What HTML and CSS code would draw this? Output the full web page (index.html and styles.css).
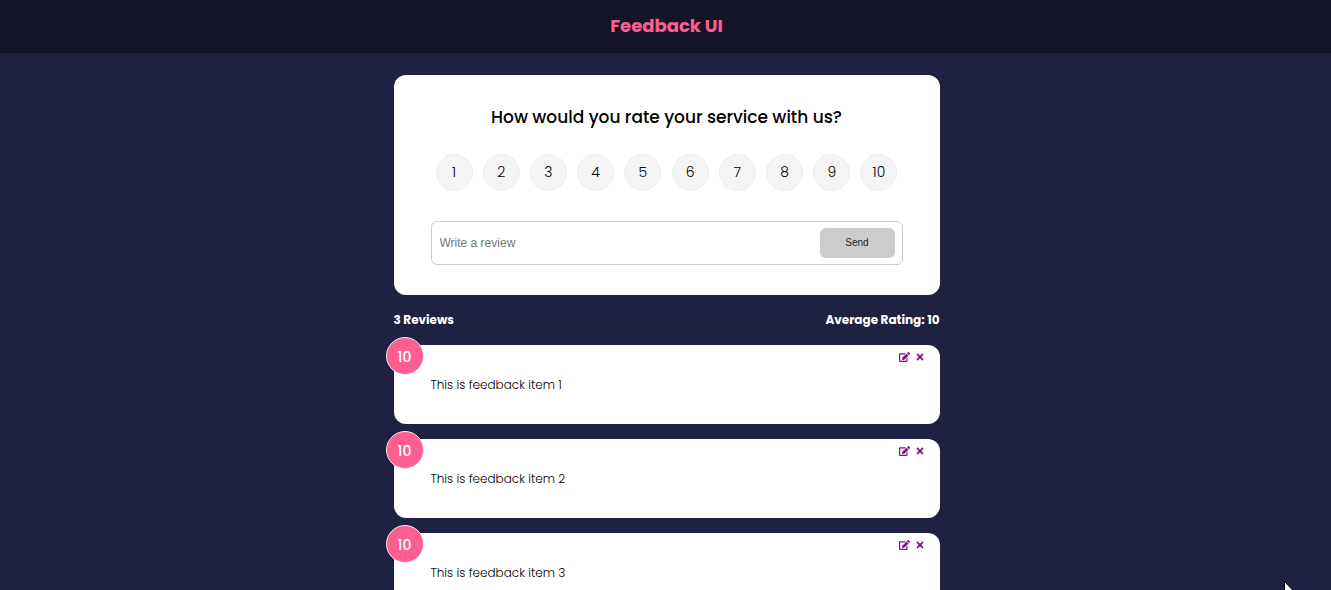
FILE: index.html
```html
<!DOCTYPE html>
<html lang="en">
<head>
<meta charset="utf-8">
<meta name="viewport" content="width=device-width, initial-scale=1">
<title>Feedback UI</title>
<link rel="stylesheet" href="styles.css">
</head>
<body>
<svg class="sprite" aria-hidden="true">
  <symbol id="edit" viewBox="0 0 576 512"><path d="M402.600 83.200l90.200 90.200c3.800 3.800 3.800 10 0 13.800L274.400 405.600l-92.800 10.300c-12.400 1.400-22.900-9.100-21.500-21.500l10.300-92.800L388.800 83.200c3.800-3.800 10-3.800 13.800 0zm162-22.900l-48.800-48.800c-15.200-15.200-39.900-15.200-55.200 0l-35.400 35.400c-3.800 3.800-3.800 10 0 13.800l90.200 90.200c3.800 3.800 10 3.800 13.800 0l35.400-35.400c15.200-15.300 15.200-40 0-55.200zM384 346.200V448H64V128h229.800c3.200 0 6.200-1.300 8.500-3.500l40-40c7.600-7.600 2.200-20.500-8.500-20.500H48C21.500 64 0 85.500 0 112v352c0 26.500 21.500 48 48 48h352c26.500 0 48-21.500 48-48V306.200c0-10.700-12.900-16-20.500-8.500l-40 40c-2.200 2.300-3.500 5.300-3.500 8.500z"/></symbol>
  <symbol id="times" viewBox="0 0 352 512"><path d="M242.720 256l100.070-100.070c12.280-12.280 12.280-32.190 0-44.480l-22.240-22.240c-12.280-12.280-32.190-12.280-44.480 0L176 189.280 75.930 89.210c-12.280-12.280-32.190-12.280-44.480 0L9.210 111.450c-12.280 12.280-12.280 32.190 0 44.480L109.280 256 9.210 356.070c-12.280 12.280-12.280 32.190 0 44.480l22.240 22.240c12.280 12.280 32.200 12.280 44.480 0L176 322.720l100.070 100.070c12.280 12.280 32.200 12.280 44.480 0l22.240-22.240c12.280-12.280 12.280-32.190 0-44.480L242.720 256z"/></symbol>
</svg>
<header class="header"><h2 class="title">Feedback UI</h2></header>
<main class="container">
  <section class="card form-card">
    <form class="form">
      <h2 class="question" id="question">How would you rate your service with us?</h2>
      <div class="rating" role="radiogroup" aria-labelledby="question">
        <label class="rate"><input type="radio" name="rating" value="1"><span>1</span></label>
        <label class="rate"><input type="radio" name="rating" value="2"><span>2</span></label>
        <label class="rate"><input type="radio" name="rating" value="3"><span>3</span></label>
        <label class="rate"><input type="radio" name="rating" value="4"><span>4</span></label>
        <label class="rate"><input type="radio" name="rating" value="5"><span>5</span></label>
        <label class="rate"><input type="radio" name="rating" value="6"><span>6</span></label>
        <label class="rate"><input type="radio" name="rating" value="7"><span>7</span></label>
        <label class="rate"><input type="radio" name="rating" value="8"><span>8</span></label>
        <label class="rate"><input type="radio" name="rating" value="9"><span>9</span></label>
        <label class="rate"><input type="radio" name="rating" value="10"><span>10</span></label>
      </div>
      <div class="input-group">
        <input class="review" type="text" placeholder="Write a review" aria-label="Write a review">
        <button class="send" type="submit" disabled>Send</button>
      </div>
    </form>
  </section>
  <div class="stats"><h4>3 Reviews</h4><h4>Average Rating: 10</h4></div>
  <article class="card item">
    <div class="badge">10</div>
    <div class="actions"><button type="button" aria-label="Edit"><svg class="edit"><use href="#edit"/></svg></button><button type="button" aria-label="Delete"><svg class="times"><use href="#times"/></svg></button></div>
    <p class="text">This is feedback item 1</p>
  </article>
  <article class="card item">
    <div class="badge">10</div>
    <div class="actions"><button type="button" aria-label="Edit"><svg class="edit"><use href="#edit"/></svg></button><button type="button" aria-label="Delete"><svg class="times"><use href="#times"/></svg></button></div>
    <p class="text">This is feedback item 2</p>
  </article>
  <article class="card item">
    <div class="badge">10</div>
    <div class="actions"><button type="button" aria-label="Edit"><svg class="edit"><use href="#edit"/></svg></button><button type="button" aria-label="Delete"><svg class="times"><use href="#times"/></svg></button></div>
    <p class="text">This is feedback item 3</p>
  </article>
</main>
<svg class="cursor" viewBox="0 0 12 19" aria-hidden="true"><path d="M.5 .5V16.500L4.200 13 6.500 18.500 9 17.500 6.700 12H11.500Z" fill="#fff" stroke="#000"/></svg>
</body>
</html>
```
FILE: styles.css
```css
* {
  box-sizing: border-box;
  margin: 0;
  padding: 0;
}

body {
  background: #1f2142;
  color: #000;
  font-family: Poppins, "Open Sans", sans-serif;
  font-size: 12px;
  font-weight: 300;
  line-height: 20px;
}

button,
input {
  font: inherit;
  border: 0;
  background: none;
}

.sprite {
  position: absolute;
  width: 0;
  height: 0;
}

.header {
  padding: 12px 22px 13px 24px;
  background: #131426;
  color: #ff5f90;
  text-align: center;
}

.title {
  font-size: 18px;
  line-height: 28px;
  font-weight: 700;
}

.container {
  max-width: 548px;
  margin: 22px auto 0;
  padding-left: 2px;
}

.card {
  position: relative;
  margin-bottom: 15px;
  border-radius: 12px;
  background: #fff;
}

.form-card {
  padding: 29px 37px 30px;
}

.question {
  font-size: 17px;
  line-height: 26px;
  font-weight: 500;
  text-align: center;
}

.rating {
  display: flex;
  justify-content: space-between;
  margin: 24px 0 30px;
  padding: 0 5px;
}

.rate {
  position: relative;
  width: 37px;
  height: 37px;
  border: 1px solid #eee;
  border-radius: 50%;
  background: #f4f4f4;
  font-size: 14px;
  line-height: 35px;
  text-align: center;
  cursor: pointer;
}

.rate input {
  position: absolute;
  inset: 0;
  opacity: 0;
}

.input-group {
  display: flex;
  align-items: center;
  padding: 6px 7px;
  border: 1px solid #ccc;
  border-radius: 6px;
}

.review {
  flex: 1;
  min-width: 0;
  padding-left: 1px;
  font-family: "Liberation Sans", Arial, sans-serif;
  outline: none;
}

.review::placeholder {
  color: #757575;
}

.send {
  width: 75px;
  height: 30px;
  border-radius: 6px;
  background: #ccc;
  color: #222;
  font-family: "Liberation Sans", Arial, sans-serif;
  font-size: 10px;
}

.stats {
  display: flex;
  justify-content: space-between;
  margin-bottom: 15px;
  color: #fff;
  font-weight: 700;
}

.item {
  padding: 30px 37px 29px;
}

.text {
  font-size: 12px;
}

.badge {
  position: absolute;
  top: -8px;
  left: -8px;
  width: 38px;
  height: 38px;
  border: 1px solid #eee;
  border-radius: 50%;
  background: #ff5f90;
  color: #fff;
  font-size: 14px;
  font-weight: 500;
  line-height: 38px;
  text-align: center;
}

.actions {
  position: absolute;
  top: 7px;
  right: 16px;
  display: flex;
  gap: 6px;
}

.actions button {
  display: flex;
  cursor: pointer;
}

.actions svg {
  height: 10px;
  fill: #861080;
}

.edit {
  width: 11px;
}

.times {
  width: 8px;
}

.cursor {
  position: fixed;
  right: 35px;
  bottom: -10px;
  width: 12px;
  height: 19px;
}
```
